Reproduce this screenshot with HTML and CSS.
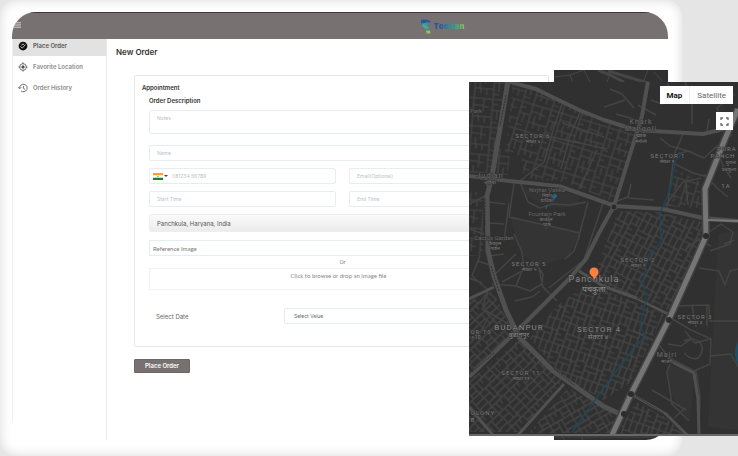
FILE: index.html
```html
<!DOCTYPE html>
<html lang="en">
<head>
<meta charset="utf-8">
<meta name="viewport" content="width=device-width, initial-scale=1">
<title>New Order</title>
<link rel="stylesheet" href="styles.css">
</head>
<body>
<div class="device">
  <div class="app">
    <header class="topbar">
      <button class="menu" type="button" aria-label="Menu">
        <svg viewBox="0 0 8 6" width="8" height="6"><path d="M0 .8h7M0 3h7M0 5.2h7" stroke="#d8d6d6" stroke-width="1"/></svg>
      </button>
      <a class="brand" href="#">
        <svg viewBox="0 0 11 15" width="11" height="15" aria-hidden="true">
          <path d="M0 .8C3 0 7 .3 9.500 2.200V3.500L5.500 3.300 3 5 0 4.500z" fill="#2a55a3"/>
          <path d="M.8 4.500L5 3.800 8 4.500 6.500 6 8 8 8.300 11H5.500L3 8.500 1 7z" fill="#359a93"/>
          <path d="M2.500 5l4 4M1.500 6.500l4 3" stroke="#6fc0a0" stroke-width=".7"/>
          <path d="M4.500 11.800L9 11.500l.5 3H4.500l1.500-1z" fill="#94c45b"/>
        </svg>
        <span class="brand-name">Tookan</span>
      </a>
    </header>
    <div class="columns">
      <nav class="sidebar">
        <a class="nav-item active" href="#">
          <svg viewBox="0 0 24 24" width="10" height="10"><circle cx="12" cy="12" r="10.500" fill="#111"/><path d="M6 13l4 4 8-8M8 10l4-3 3 2" fill="none" stroke="#ddd" stroke-width="2"/></svg>Place Order</a>
        <a class="nav-item" href="#">
          <svg viewBox="0 0 24 24" width="10" height="10" fill="none" stroke="#555" stroke-width="2"><circle cx="12" cy="12" r="8"/><circle cx="12" cy="12" r="3" fill="#444"/><path d="M12 1v4M12 19v4M1 12h4M19 12h4"/></svg>Favorite Location</a>
        <a class="nav-item" href="#">
          <svg viewBox="0 0 24 24" width="10" height="10" fill="none" stroke="#555" stroke-width="2"><path d="M4 12a9 9 0 1 1 3 6.700M0 10l4 4 4-4M13 7v6l4 2"/></svg>Order History</a>
      </nav>
      <main class="content">
        <h1>New Order</h1>
        <form class="order">
          <section class="card">
            <h2>Appointment</h2>
            <div class="fields">
              <h3>Order Description</h3>
              <textarea class="field notes" placeholder="Notes" aria-label="Notes"></textarea>
              <input class="field" type="text" placeholder="Name" aria-label="Name">
              <div class="pair">
                <div class="field phone">
                  <svg viewBox="0 0 10 7" width="10" height="7" aria-hidden="true"><path fill="#fff" d="M0 0h10v7H0z"/><path fill="#ff9d3c" d="M0 0h10v2.300H0z"/><path fill="#128a19" d="M0 4.700h10V7H0z"/><circle cx="5" cy="3.500" r=".7" fill="#7777bb"/></svg>
                  <span class="caret"></span>
                  <input type="tel" placeholder="081234 56789" aria-label="Phone">
                </div>
                <input class="field" type="email" placeholder="Email(Optional)" aria-label="Email">
              </div>
              <div class="pair">
                <input class="field" type="text" placeholder="Start Time" aria-label="Start Time">
                <input class="field" type="text" placeholder="End Time" aria-label="End Time">
              </div>
              <input class="field address" type="text" value="Panchkula, Haryana, India" aria-label="Address">
              <input class="field reference" type="text" value="Reference Image" aria-label="Image name">
              <p class="or">Or</p>
              <button class="drop" type="button">Click to browse or drop an image file</button>
              <div class="date-row">
                <label for="date">Select Date</label>
                <select class="field" id="date"><option>Select Value</option></select>
              </div>
            </div>
          </section>
          <button class="submit" type="submit">Place Order</button>
        </form>
      </main>
      <aside class="mini-map">
        <svg viewBox="554 70 114 370" preserveAspectRatio="xMinYMin slice" aria-hidden="true" fill="none" stroke="#464646">
          <path d="M598 70l12 5 14 7M608 71l60 18" stroke-width="3"/>
          <path d="M554 77l16-2 14-5M570 75l3 8M584 70l6 12M612 70l-5 12M648 70l-5 12M654 72l8 9M554 437l114 0M560 434l6 8M580 432l3 9" stroke-width="1"/>
        </svg>
      </aside>
    </div>
  </div>
</div>

<section class="map" aria-label="Map">
  <svg class="map-canvas" viewBox="469 82 269 354" preserveAspectRatio="xMidYMid slice" aria-hidden="true">
    <defs>
      <pattern id="blocks" width="30" height="28" patternUnits="userSpaceOnUse"><path d="M0 1h30M1 0v28M11 1v13M1 8h10M1 19h19M20 1v27M11 9h5M20 12h10M25 12v9M13 19v6M6 12v7M20 6h5M7 19v5M20 24h6" fill="none" stroke="#474747" stroke-width="1.100"/></pattern>
      <pattern id="dense" width="28" height="24" patternUnits="userSpaceOnUse"><path d="M0 1h28M1 0v24M7 1v11M13 1v11M19 1v23M1 12h18M25 1v8M19 9h9M1 17h13M14 12v12M7 17v7M19 15h5M19 20h9" fill="none" stroke="#494949" stroke-width="1.200"/></pattern>
      <pattern id="g5" href="#blocks" patternTransform="rotate(5)"/>
      <pattern id="g18" href="#blocks" patternTransform="rotate(17)"/>
      <pattern id="d28" href="#dense" patternTransform="rotate(27)"/>
      <pattern id="d20" href="#dense" patternTransform="rotate(19)"/>
      <pattern id="d45" href="#dense" patternTransform="rotate(46)"/>
      <pattern id="d60" href="#dense" patternTransform="rotate(60)"/>
    </defs>
    <path fill="#303030" d="M469 82h269v354H469z"/>
    <g fill="#343434">
      <path d="M524 188l34 2 22 8-5 10-28 1-20-12zM510 218l36 8 33 8-10 24-28 8-20-10z"/>
      <path d="M718 235l20-4v200l-30-3zM667 365l28 8-5 50-20-28z"/>
    </g>
    <g>
      <path fill="url(#g5)" d="M469 82h37l-14 92-23 0zM495 149l15 2-2 25-15-1z"/>
      <path fill="url(#g18)" d="M513 87l27 6 60 29 4 1v76l-40-16-40-4-3-22-16-4z"/>
      <path fill="url(#g18)" d="M604 124l33 8-13 50-10 20-10-2z"/>
      <path fill="url(#g5)" d="M469 193h14v64h-14z"/>
      <path fill="url(#d28)" d="M618 212l40 1 30 7 16 4-6 28-29 60-64-22-13-8z"/>
      <path fill="url(#d20)" d="M588 284l76 31-33 68-27 18-28-15-22-17-24-30 27-32z"/>
      <path fill="url(#d45)" d="M469 382l52-43 42 42-43 52h-51zM469 302l24-10 12 25 11 17-21 20-26 20z"/>
      <path fill="url(#d60)" d="M568 389l35 20 15 7-8 18h-82z"/>
      <path fill="url(#d20)" d="M636 403l30 16 18 17h-68z"/>
      <path fill="url(#g18)" d="M675 170l24 12 4 28-35-3z"/>
    </g>
    <g fill="none" stroke="#444" stroke-width="1.500" stroke-linejoin="round">
      <path d="M562 105l-8 23-10 35-23 18M580 113l-10 24-9 33M604 138l-42-14M607 150l-64-14M597 151l-18 39"/>
      <path d="M520 183l8 20 12 6 12-4 18 1 16-3M514 184l-5 34 36 8 35 8-6 18-9 8M545 225l2 5M504 242l5-38M588 203l-10 38M604 201l-20 60-35 28M514 235l8 18 2 18-22 12"/>
      <path d="M478 262l12 4M492 285l24 2 14 5 12-7 1-10-5-7-6-6M516 287l6-15 10-7M539 270l4 18 14 14M515 302l17-4 8-6"/>
      <path d="M674 100l-12 5-11-4M667 85l8 8 11 4M685 82l2 8M692 125v-20l7-8 11 1M735 95l-18 14 4 11M709 120l-2 12M610 90l12 5 12 14M604 108l21-7M638 106l18 10M634 120l-18-5"/>
      <path d="M683 135l-9 21-7 55M660 139l10 8 22 6M674 156l14-4 16 7 12-11 16-12M716 147l7 20 8 12M704 175l14 15 10 8M708 178l-15-4-18-9M665 207l18-24 18-4M686 184l2 22M609 205l19-7 3-13M628 199l26 2M724 138l-8 30-8 10"/>
      <path d="M706 235l15-10 12 8-3 12-20 7M711 247l-13-6-12 9M724 245l10-4M699 269l20 3 6 14 5-14 8-2M672 307l37-1 1 16 28 0M671 319l20 12 20 9-1 25-16 7-26-14-11-15-24-11M692 306l4 22M707 307v20M710 340l-15 4-10-12M711 357l20-2 7 13M668 345l13 2 10-7M684 342c8-5 20 0 18 10s-10 10-18 2M670 365l-3 8 5 32 17 17M652 391l34 20M685 409l-11 10M696 372l4 25-1 36"/>
      <path d="M469 205l16-8M469 230l15 5M505 205l-16-2M504 225l-16-1M504 255l-15 2M480 257l-8 20 16 14-6 20M482 284l-13-5M483 310l30 18M490 315l-11 21M494 276l22-21"/>
    </g>
    <g fill="none" stroke="#505050" stroke-linejoin="round">
      <path stroke-width="5" d="M508 82l-16 95-5 20 1 55 6 25 12 34 13 27 33 33 51 36 17 8"/>
      <path stroke-width="4" d="M506 82l30 8 43 21 25 10 32 10 67 4 25-6"/>
      <path stroke-width="4" d="M469 177l40 5 50 5 45 16 11 4 48 3 40 9 35 3"/>
      <path stroke-width="4" d="M648 82l-6 35-28 90-15 27-13 26-17 20-43 43-57 55"/>
      <path stroke-width="3" d="M579 272l24 15 33 12 34 17M564 385l-46 51M469 300l25-12M668 361l26 13 4 26 1 36"/>
      <path stroke-width="3" d="M631 395l35 20 21 21M469 408l24 28"/>
    </g>
    <g fill="none" stroke="#303030" stroke-width="1" stroke-dasharray="2 1">
      <path d="M506 96l-6 31M485 200v27M491 267l8 25M588 190l9-30M569 186l-26-3M472 373l22-19M520 322l24-20M554 370l20 16M637 299l29 12M636 397l28 18"/>
    </g>
    <path d="M683 153l-8 10-4 24-8 21-3 5 1 30-13 14-5 26 3 17-6 27 5 11-12 12-30 40-31 43" fill="none" stroke="#1c4858" stroke-width="1.300"/>
    <path d="M738 342c-4 8-4 16 0 24" fill="#214d60"/>
    <path d="M551 198l4-3 2 2-4 4zM546 210l1-4" fill="#1f6685" stroke="#1f6685"/>
    <g fill="none" stroke-linejoin="round">
      <path stroke="#414141" stroke-width="8" d="M738 110l-13 30-20 50 1 47-10 23-26 58-39 77-19 41"/>
      <path stroke="#757575" stroke-width="5" d="M738 110l-13 30-20 50 1 47-10 23-26 58-39 77-19 41"/>
    </g>
    <path d="M704 221l34 1" stroke="#777" stroke-width="2"/>
    <g fill="#2c2c2c"><circle cx="706" cy="237" r="3"/><circle cx="669" cy="321" r="3"/><circle cx="631" cy="395" r="3"/><circle cx="624" cy="415" r="3"/><circle cx="614" cy="208" r="3" stroke="#505050"/></g>
    <g class="places">
      <text x="533" y="139">SECTOR 6</text><text class="sub" x="533" y="144">सेक्टर ६</text>
      <text x="668" y="159">SECTOR 1</text><text class="sub" x="667" y="164">सेक्टर १</text>
      <text x="529" y="267">SECTOR 5</text><text class="sub" x="529" y="272">सेक्टर ५</text>
      <text x="638" y="263">SECTOR 2</text><text class="sub" x="638" y="268">सेक्टर २</text>
      <text x="695" y="320">SECTOR 3</text><text class="sub" x="695" y="325">सेक्टर ३</text>
      <text x="521" y="376">SECTOR 11</text><text class="sub" x="521" y="381">सेक्टर ११</text>
      <text class="area" x="641" y="125">Khark</text><text class="area" x="641" y="132">Mangoli</text><text class="sub" x="641" y="138">खड़क</text><text class="sub" x="641" y="144">मंगोली</text>
      <text x="727" y="152">PURA</text><text x="723" y="159">PANCH</text><text class="sub" x="731" y="165">पुराना</text><text class="sub" x="729" y="172">पंचकुला</text>
      <text x="726" y="189">1A</text>
      <text class="area" x="490" y="179">Judian</text><text class="sub" x="490" y="185">जुडियां</text>
      <text class="park" x="547" y="193">Nirjhar Vatika</text><text class="sub" x="547" y="198">निर्झर</text><text class="sub" x="547" y="203">वाटिका</text>
      <text class="park" x="547" y="217">Fountain Park</text><text class="sub" x="546" y="222">फाउंटेन</text><text class="sub" x="547" y="227">पार्क</text>
      <text class="park" x="494" y="241">Cactus Garden</text><text class="sub" x="495" y="246">कैक्टस</text><text class="sub" x="495" y="251">गार्डन</text>
      <text class="park" x="476" y="114">Park</text>
      <text x="481" y="335">OR 10</text><text class="sub" x="476" y="340">र-10</text>
      <text class="town" x="519" y="331">BUDANPUR</text><text class="sub big" x="519" y="338">बुडानपुर</text>
      <text class="town" x="599" y="333">SECTOR 4</text><text class="sub big" x="598" y="340">सेक्टर ४</text>
      <text class="area" x="667" y="358">Majri</text><text class="sub" x="667" y="364">माजरी</text>
      <text x="483" y="416">OLONY</text><text x="473" y="423">B</text>
      <text class="city" x="594" y="283">Panchkula</text><text class="city-sub" x="594" y="293">पंचकुला</text>
    </g>
    <path d="M594.500 281c-.5-3.500-5-4.500-5-8a4.500 4.500 0 0 1 9 0c0 3.500-3.500 4.500-4 8z" fill="#ff7f41"/>
  </svg>
  <div class="map-type">
    <button class="selected" type="button">Map</button>
    <button type="button">Satellite</button>
  </div>
  <button class="fullscreen" type="button" aria-label="Full screen">
    <svg viewBox="0 0 9 9" width="9" height="9" fill="none" stroke="#666" stroke-width="1.300"><path d="M1 3V1h2M6 1h2v2M8 6v2H6M3 8H1V6"/></svg>
  </button>
</section>
</body>
</html>
```

FILE: styles.css
```css
* { box-sizing: border-box; }

body {
  margin: 0;
  min-height: 100vh;
  background: #e5e5e5;
  color: #444;
  font-family: Inter, "Open Sans", sans-serif;
  font-size: 6px;
  position: relative;
  overflow-x: hidden;
}

button, input, select, textarea { font: inherit; margin: 0; }
h1, h2, h3, p { margin: 0; }
a { text-decoration: none; color: inherit; }
svg { display: block; flex: none; }

.device {
  display: flex;
  min-height: 100vh;
  margin-right: 56px;
  padding: 12px 14px 16px 12px;
  background: #fff;
  border-radius: 16px;
  box-shadow: inset 0 0 12px #d9d9d9;
}

.app {
  flex: 1;
  display: flex;
  flex-direction: column;
  background: #fff;
  border-radius: 24px 24px 22px 22px;
  overflow: hidden;
}

.topbar {
  display: grid;
  grid-template-columns: 1fr auto 1fr;
  height: 27px;
  background: #777171;
  border-top: 1px solid #3b3b3f;
  align-items: center;
}

.menu {
  justify-self: start;
  padding: 0 0 2px 2px;
  border: 0;
  background: none;
}

.brand {
  grid-column: 2 / 4;
  display: flex;
  align-items: center;
  gap: 2px;
  padding-left: 81px;
}

.brand-name {
  font: 800 8px/12px "Open Sans", sans-serif;
  background: linear-gradient(90deg, #2456a5 20%, #2d9c94 60%, #94c45b);
  background-clip: text;
  color: transparent;
}

.columns {
  flex: 1;
  display: grid;
  grid-template-columns: 95px 1fr 114px;
}

.sidebar {
  display: flex;
  flex-direction: column;
  gap: 4px;
  border-right: 1px solid #eaeaea;
  border-left: 1px solid #eee;
}

.nav-item {
  display: flex;
  align-items: center;
  gap: 5px;
  padding: 0 5px 3px;
  font-size: 6px;
  line-height: 14px;
  font-weight: 600;
  color: #8b8b8b;
}

.nav-item.active { background: #e2e2e2; color: #555; }

.content { padding: 8px 5px 20px 9px; }

h1 { font-size: 8px; line-height: 10px; font-weight: 600; color: #333; }

.order { padding: 18px 0 0 18px; }

.card {
  padding: 6px 12px 22px 7px;
  border: 1px solid #e6e6e6;
  border-radius: 2px;
}

h2, h3 { font-size: 6px; font-weight: 600; color: #333; }
h2 { line-height: 11px; }
h3 { line-height: 8px; margin-bottom: -2px; }

.fields {
  display: flex;
  flex-direction: column;
  gap: 7px;
  padding: 4px 0 0 7px;
}

.field {
  display: block;
  width: 100%;
  min-width: 0;
  height: 16px;
  padding: 0 7px;
  border: 1px solid #e7edee;
  border-radius: 2px;
  background: #fff;
  color: #666;
  font-size: 5px;
}

::placeholder { color: #bcc1c9; opacity: 1; }

.notes { height: 24px; padding-top: 4px; margin-bottom: 4px; resize: none; }

.pair { display: grid; grid-template-columns: 1fr 1fr; gap: 13px; }

.phone { display: flex; align-items: center; padding: 0 3px; }

.caret {
  margin: 0 4px 0 1px;
  border: 2px solid transparent;
  border-top-color: #444;
  border-bottom: 0;
}

.phone input {
  flex: 1;
  min-width: 0;
  padding: 0;
  border: 0;
  background: none;
  font-size: 5px;
}

.address {
  height: 18px;
  border-color: #eee;
  background: linear-gradient(#fafafa, #ececec);
  color: #555;
  font-size: 6px;
}

.reference {
  margin-top: 1px;
  padding: 0 3px;
  border-radius: 0;
  color: #777;
  font-family: Lato, sans-serif;
  font-size: 6px;
}

.or {
  margin: -6px 0;
  color: #888;
  font: 6px/10px Roboto, sans-serif;
  text-align: center;
}

.drop {
  height: 22px;
  padding: 0 8px 7px 0;
  border: 1px solid #f1f1f1;
  background: #fff;
  color: #888;
  font: 6px/8px Lato, sans-serif;
}

.date-row {
  display: grid;
  grid-template-columns: 128px 1fr;
  align-items: center;
  margin-top: 11px;
  padding-left: 7px;
  color: #666;
}

.date-row select { appearance: none; padding: 0 9px; }

.submit {
  display: block;
  margin-top: 12px;
  width: 56px;
  height: 14px;
  padding: 0;
  border: 1px solid #6d6767;
  border-radius: 1px;
  background: #777171;
  color: #fff;
  font-size: 6px;
  line-height: 12px;
  font-weight: 600;
}

.mini-map {
  position: relative;
  margin-top: 31px;
  background: #303030;
  overflow: hidden;
}

.mini-map svg { position: absolute; inset: 0; width: 100%; height: 100%; }

.map {
  position: absolute;
  top: 82px;
  right: 0;
  bottom: 20px;
  width: 269px;
  background: #303030;
  border-bottom: 2px solid #686868;
}

.map-canvas { width: 100%; height: 100%; }

.places {
  fill: #7d7d7d;
  stroke: #303030;
  stroke-width: 1px;
  paint-order: stroke;
  text-anchor: middle;
  font: 6px Roboto, "Noto Sans", sans-serif;
  letter-spacing: 1px;
}

.places .sub { font-size: 5px; letter-spacing: 0; }
.places .sub.big { font-size: 7px; fill: #888; }
.places .park { letter-spacing: 0; fill: #666; }
.places .area { font-size: 7px; fill: #6c6c6c; }
.places .town { font-size: 8px; fill: #898989; }
.places .city { font-size: 9px; fill: #8b8b8b; }
.places .city-sub { font-size: 8px; fill: #999; letter-spacing: 0; }

.map-type {
  position: absolute;
  top: 4px;
  right: 5px;
  display: flex;
  background: #fff;
}

.map-type button {
  height: 18px;
  padding: 0 7px;
  border: 0;
  background: #fff;
  color: #666;
  font: 8px Roboto, sans-serif;
}

.map-type .selected { color: #111; font-weight: 700; border-right: 1px solid #eee; }

.fullscreen {
  position: absolute;
  top: 30px;
  right: 5px;
  display: grid;
  place-items: center;
  width: 17px;
  height: 18px;
  padding: 0;
  border: 0;
  background: #fff;
}
```
